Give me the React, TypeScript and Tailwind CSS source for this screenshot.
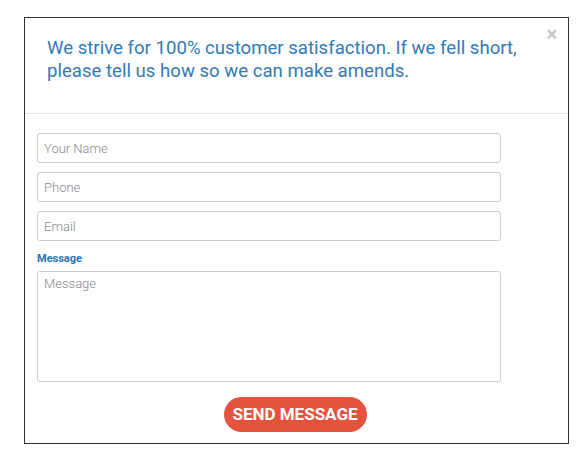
export default function App() {
  return (
    <div className="w-[587px] h-[461px] bg-white pt-[17px] pl-[24px] font-['Roboto',sans-serif]">
      <div className="relative w-[545px] h-[427px] border border-[#333] bg-white">
        {/* Header */}
        <div className="h-[96px] border-b border-[#e5e5e5] pl-[22px] pr-[30px] pt-[19px]">
          <p className="text-[18.6px] leading-[23px] text-[#337ab7]">
            We strive for 100% customer satisfaction. If we fell short, please tell us how so we can make amends.
          </p>
        </div>
        <button className="absolute right-[11px] top-[6px] text-[20px] leading-none text-[#c4c4c4] font-bold">
          ×
        </button>

        {/* Form */}
        <form className="pl-[12px] pt-[19px]">
          <div className="flex flex-col gap-[9px] w-[464px]">
            <input
              placeholder="Your Name"
              className="h-[30px] rounded-[3px] border border-[#ccc] px-[6px] text-[13px] font-light text-[#555] placeholder:text-[#888] outline-none"
            />
            <input
              placeholder="Phone"
              className="h-[30px] rounded-[3px] border border-[#ccc] px-[6px] text-[13px] font-light text-[#555] placeholder:text-[#888] outline-none"
            />
            <input
              placeholder="Email"
              className="h-[30px] rounded-[3px] border border-[#ccc] px-[6px] text-[13px] font-light text-[#555] placeholder:text-[#888] outline-none"
            />
          </div>
          <label className="block mt-[11px] mb-[5px] text-[11px] leading-[14px] font-bold text-[#2a73b5]">Message</label>
          <textarea
            placeholder="Message"
            className="block w-[464px] h-[111px] resize-none rounded-[3px] border border-[#ccc] px-[6px] py-[2px] text-[13px] font-light text-[#555] placeholder:text-[#888] outline-none"
          />
          <div className="w-[516px] flex justify-center mt-[15px]">
            <button
              type="button"
              className="h-[35px] w-[143px] rounded-full bg-[#e5533f] text-white font-bold text-[17px]"
            >
              SEND MESSAGE
            </button>
          </div>
        </form>
      </div>
    </div>
  );
}
